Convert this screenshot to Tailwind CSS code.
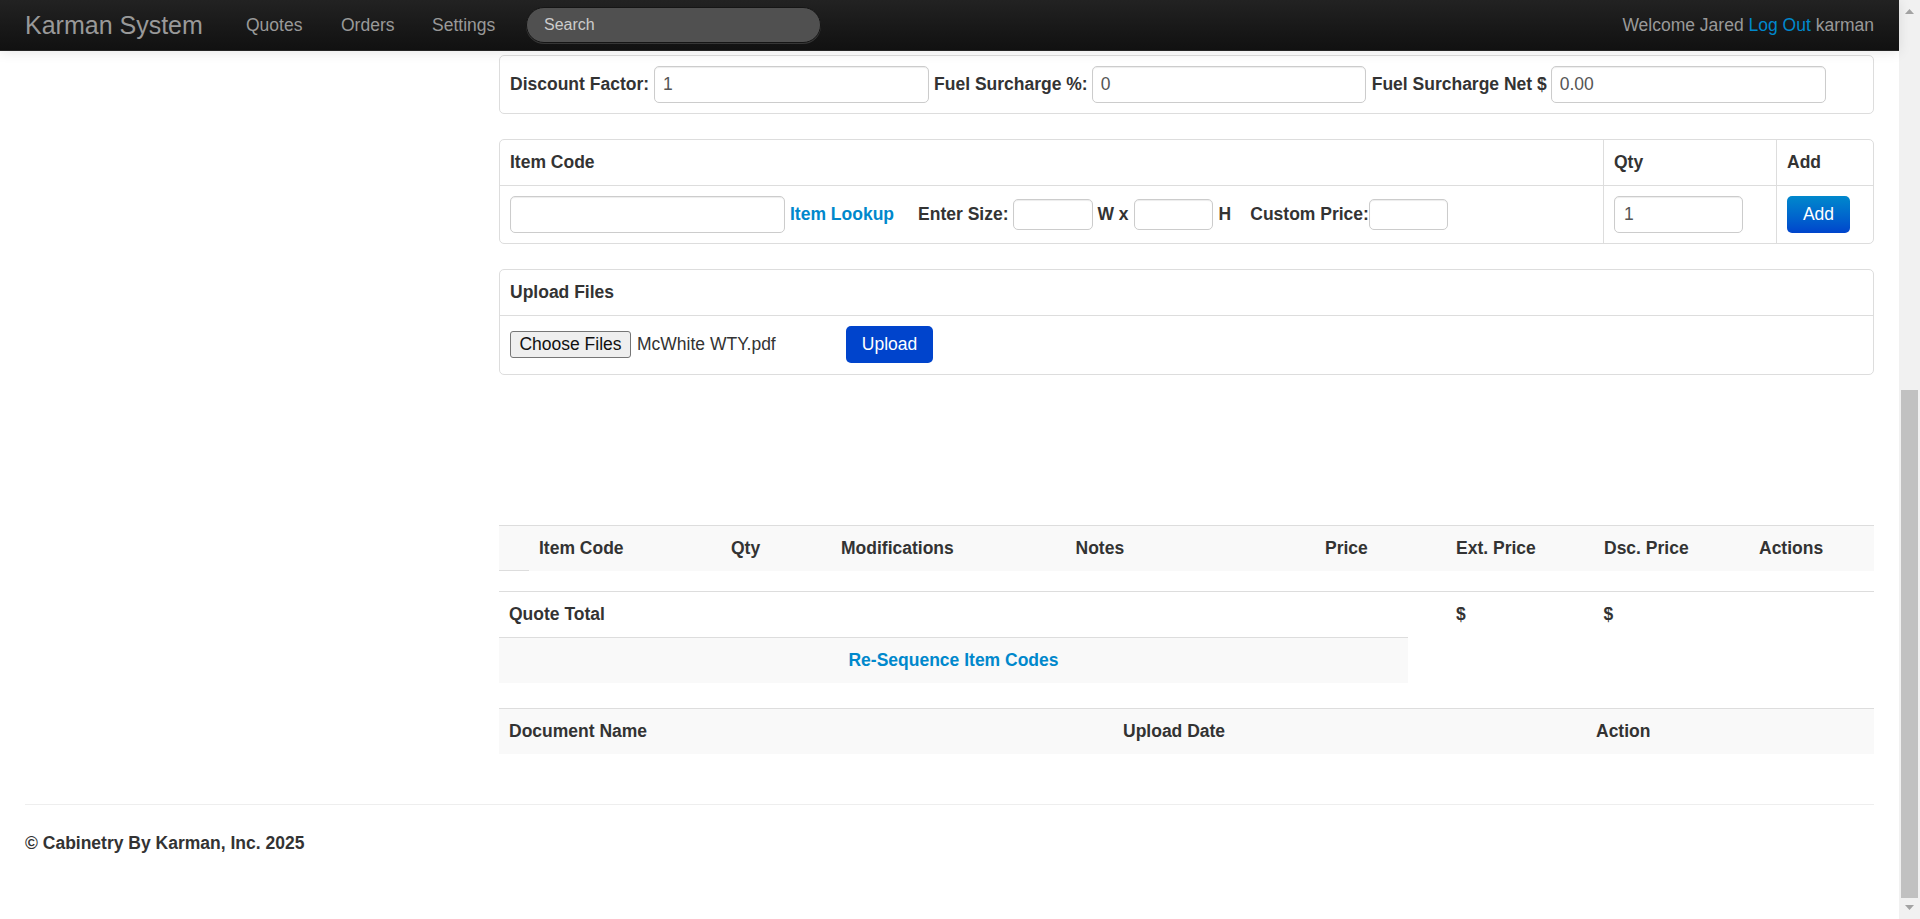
<!DOCTYPE html>
<html lang="en">
<head>
    <meta charset="UTF-8">
    <title>Karman System</title>
    <script src="https://cdn.jsdelivr.net/npm/@tailwindcss/browser@4"></script>
</head>
<body class="bg-white text-[#333] font-['Liberation_Sans',Arial,sans-serif] text-[17.5px] leading-[25px]">
<div class="flex h-[919px] overflow-hidden">
    <div class="flex-1 min-w-0">

        <!-- Navbar -->
        <nav class="relative z-10 h-[51px] pl-[25px] pr-[25px] flex items-center bg-linear-to-b from-[#222] to-[#111] border-b border-[#252525] shadow-[0_1px_12px_rgba(0,0,0,0.1)]">
            <a href="#" class="text-[25px] text-[#999] w-[221px]">Karman System</a>
            <a href="#" class="text-[#999] w-[95px]">Quotes</a>
            <a href="#" class="text-[#999] w-[91px]">Orders</a>
            <a href="#" class="text-[#999] w-[94px]">Settings</a>
            <input type="text" placeholder="Search" class="w-[295px] h-[36px] px-[17px] bg-[#505050] rounded-[19px] border border-[#151515] text-[16px] text-[#ccc] placeholder:text-[#ccc] shadow-[0_1px_0_rgba(255,255,255,0.15)]">
            <div class="ml-auto text-[#999]">Welcome Jared <a href="#" class="text-[#0088cc]">Log Out</a> karman</div>
        </nav>

        <div class="pl-[499px] pr-[25px] pt-[4px]">

            <!-- Discount / fuel -->
            <div class="h-[59px] border border-[#ddd] rounded-[5px] pl-[10px] flex items-center font-bold">
                <label>Discount Factor:</label>
                <input type="text" value="1" class="ml-[5px] w-[275px] h-[37px] px-[8px] border border-[#ccc] rounded-[5px] font-normal text-[#555] shadow-[inset_0_1px_1px_rgba(0,0,0,0.075)]">
                <label class="ml-[5px]">Fuel Surcharge %:</label>
                <input type="text" value="0" class="ml-[4px] w-[274px] h-[37px] px-[8px] border border-[#ccc] rounded-[5px] font-normal text-[#555] shadow-[inset_0_1px_1px_rgba(0,0,0,0.075)]">
                <label class="ml-[6px]">Fuel Surcharge Net $</label>
                <input type="text" value="0.00" class="ml-[4px] w-[275px] h-[37px] px-[8px] border border-[#ccc] rounded-[5px] font-normal text-[#555] shadow-[inset_0_1px_1px_rgba(0,0,0,0.075)]">
            </div>

            <!-- Item entry -->
            <div class="mt-[25px] h-[105px] border border-[#ddd] rounded-[5px] grid grid-cols-[1103px_173px_1fr] grid-rows-[46px_1fr]">
                <div class="px-[10px] flex items-center font-bold border-b border-[#ddd]">Item Code</div>
                <div class="px-[10px] flex items-center font-bold border-b border-l border-[#ddd]">Qty</div>
                <div class="px-[10px] flex items-center font-bold border-b border-l border-[#ddd]">Add</div>
                <div class="pl-[10px] flex items-center font-bold">
                    <input type="text" class="w-[275px] h-[37px] px-[9px] border border-[#ccc] rounded-[5px] shadow-[inset_0_1px_1px_rgba(0,0,0,0.075)]">
                    <a href="#" class="ml-[5px] text-[#0088cc]">Item Lookup</a>
                    <span class="ml-[24px]">Enter Size:</span>
                    <input type="text" class="ml-[5px] w-[80px] h-[31px] border border-[#ccc] rounded-[5px] shadow-[inset_0_1px_1px_rgba(0,0,0,0.075)]">
                    <span class="ml-[4px]">W x</span>
                    <input type="text" class="ml-[5px] w-[79px] h-[31px] border border-[#ccc] rounded-[5px] shadow-[inset_0_1px_1px_rgba(0,0,0,0.075)]">
                    <span class="ml-[6px]">H</span>
                    <span class="ml-[19px]">Custom Price:</span>
                    <input type="text" class="w-[79px] h-[31px] border border-[#ccc] rounded-[5px] shadow-[inset_0_1px_1px_rgba(0,0,0,0.075)]">
                </div>
                <div class="px-[10px] flex items-center border-l border-[#ddd]">
                    <input type="text" value="1" class="w-[129px] h-[37px] px-[9px] border border-[#ccc] rounded-[5px] text-[#555] shadow-[inset_0_1px_1px_rgba(0,0,0,0.075)]">
                </div>
                <div class="px-[10px] flex items-center border-l border-[#ddd]">
                    <button class="w-[63px] h-[37px] rounded-[5px] text-white bg-linear-to-b from-[#0088cc] to-[#0044cc]">Add</button>
                </div>
            </div>

            <!-- Upload -->
            <div class="mt-[25px] h-[106px] border border-[#ddd] rounded-[5px]">
                <div class="h-[46px] px-[10px] flex items-center font-bold border-b border-[#ddd]">Upload Files</div>
                <div class="h-[56px] pl-[10px] flex items-center">
                    <button class="w-[121px] h-[27px] bg-[#efefef] border border-[#767676] rounded-[3px] text-[#111]">Choose Files</button>
                    <span class="ml-[6px] w-[209px]">McWhite WTY.pdf</span>
                    <button class="w-[87px] h-[37px] rounded-[5px] bg-[#0044cc] text-white">Upload</button>
                </div>
            </div>

            <!-- Line items -->
            <div class="mt-[150px] h-[46px] relative border-t border-[#ddd] bg-[#f9f9f9] flex items-center font-bold">
                <div class="absolute left-0 bottom-0 w-[30px] border-b border-[#ddd]"></div>
                <div class="w-[232px] pl-[40px]">Item Code</div>
                <div class="w-[110px]">Qty</div>
                <div class="w-[234.500px]">Modifications</div>
                <div class="w-[249.500px]">Notes</div>
                <div class="w-[131px]">Price</div>
                <div class="w-[148px]">Ext. Price</div>
                <div class="w-[155px]">Dsc. Price</div>
                <div>Actions</div>
            </div>

            <!-- Quote total -->
            <div class="mt-[20px] h-[46px] border-t border-[#ddd] flex items-center font-bold">
                <div class="w-[957px] pl-[10px]">Quote Total</div>
                <div class="w-[147.500px]">$</div>
                <div>$</div>
            </div>
            <div class="w-[909px] h-[46px] border-t border-[#ddd] bg-[#f9f9f9] flex items-center justify-center font-bold">
                <a href="#" class="text-[#0088cc]">Re-Sequence Item Codes</a>
            </div>

            <!-- Documents -->
            <div class="mt-[25px] h-[46px] border-t border-[#ddd] bg-[#f9f9f9] flex items-center font-bold">
                <div class="w-[624px] pl-[10px]">Document Name</div>
                <div class="w-[473px]">Upload Date</div>
                <div>Action</div>
            </div>
        </div>

        <!-- Footer -->
        <footer class="mx-[25px] mt-[50px] border-t border-[#eee] pt-[26px] font-bold">
            © Cabinetry By Karman, Inc. 2025
        </footer>
    </div>

    <!-- Scrollbar -->
    <div class="w-[21px] shrink-0 bg-[#f1f1f1] flex flex-col items-center">
        <svg class="w-[21px] h-[21px] shrink-0" viewBox="0 0 21 21"><path d="M10.500 9L15 14H6z" fill="#a3a3a3"/></svg>
        <div class="mt-[369px] w-[17px] h-[508px] bg-[#c1c1c1]"></div>
        <svg class="w-[21px] h-[21px] shrink-0" viewBox="0 0 21 21"><path d="M6 7h9l-4.500 5z" fill="#a3a3a3"/></svg>
    </div>
</div>
</body>
</html>
